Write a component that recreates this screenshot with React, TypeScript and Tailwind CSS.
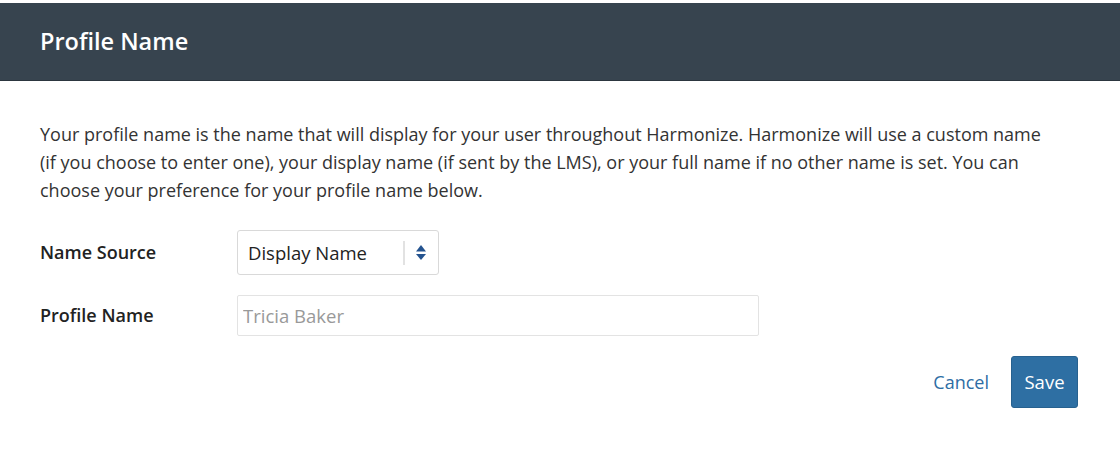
import React from 'react';

const font = { fontFamily: '"Open Sans", "Noto Sans", Arial, sans-serif' };

export default function App() {
  return (
    <div className="w-[1120px] h-[450px] bg-white pt-[3px]" style={font}>
      <div className="h-[78px] bg-[#37444f] border-b border-[#2c363f] flex items-center px-10">
        <h1 className="text-[23.5px] font-semibold text-white leading-none">Profile Name</h1>
      </div>

      <div className="px-10 pt-[39px]">
        <p className="text-[18px] leading-[28px] text-[#333333] whitespace-nowrap">
          Your profile name is the name that will display for your user throughout Harmonize. Harmonize will use a custom name
          <br />
          (if you choose to enter one), your display name (if sent by the LMS), or your full name if no other name is set. You can
          <br />
          choose your preference for your profile name below.
        </p>

        <div className="flex items-center mt-[26px]">
          <label className="w-[197px] text-[18px] font-semibold text-[#222222]">Name Source</label>
          <div className="w-[202px] h-[45px] border border-[#d9d9d9] rounded-[3px] flex items-center pl-[10px] pr-[11px]">
            <span className="flex-1 text-[18.5px] text-[#222222]">Display Name</span>
            <span className="w-[2px] h-[24px] bg-[#e2e2e2] mr-[10px]" />
            <svg width="12" height="17" viewBox="0 0 12 17">
              <polygon points="6,1 11,7.5 1,7.5" fill="#24538f" />
              <polygon points="1,10 11,10 6,16" fill="#24538f" />
            </svg>
          </div>
        </div>

        <div className="flex items-center mt-[20px]">
          <label className="w-[197px] text-[18px] font-semibold text-[#222222]">Profile Name</label>
          <input
            className="w-[522px] h-[41px] border border-[#e3e3e3] rounded-[2px] px-[5px] text-[18.5px] text-[#999999] outline-none"
            style={font}
            value="Tricia Baker"
            readOnly
          />
        </div>

        <div className="flex justify-end items-center mt-[20px] pr-[2px]">
          <button className="text-[18px] text-[#2e6da4] mr-[22px]" style={font}>Cancel</button>
          <button
            className="w-[67px] h-[52px] bg-[#2e6fa3] rounded-[3px] text-white text-[18.5px] border border-[#27618f]"
            style={font}
          >
            Save
          </button>
        </div>
      </div>
    </div>
  );
}
